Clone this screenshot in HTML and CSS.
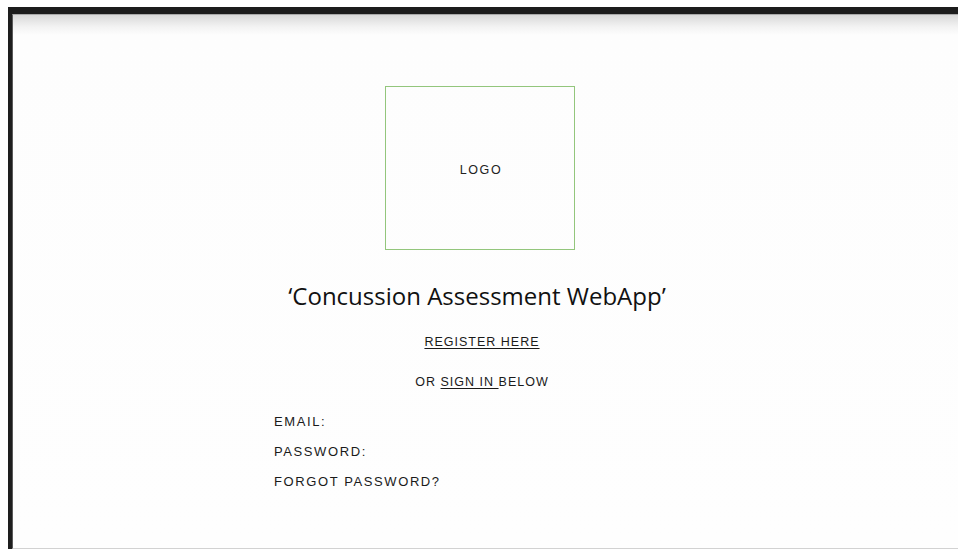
FILE: index.html
```html
<!DOCTYPE html>
<html lang="en">
<head>
<meta charset="utf-8">
<title>Concussion Assessment WebApp</title>
<link rel="stylesheet" href="styles.css">
</head>
<body>
<div class="frame">
  <main class="page">
    <section class="intro">
      <div class="logo-box"><span class="logo-text">LOGO</span></div>
      <h1 class="app-title">‘Concussion Assessment WebApp’</h1>
      <p class="register"><a href="#" class="link">REGISTER HERE</a></p>
      <p class="signin">OR <a href="#" class="link">SIGN IN </a>BELOW</p>
    </section>
    <section class="login">
      <p class="field">EMAIL:</p>
      <p class="field">PASSWORD:</p>
      <p class="field">FORGOT PASSWORD?</p>
    </section>
  </main>
</div>
</body>
</html>
```
FILE: styles.css
```css
html, body {
  margin: 0;
  padding: 0;
  height: 100%;
  background: #ffffff;
  overflow: hidden;
}

.frame {
  box-sizing: border-box;
  height: calc(100% - 7px);
  margin: 7px 0 0 8px;
  border-top: 7px solid #1c1c1c;
  border-left: 4px solid #1e1e1e;
  display: flex;
}

.page {
  flex: 1;
  box-sizing: border-box;
  border-top: 1px solid #a9a9a9;
  border-left: 1px solid #5a5a5a;
  border-bottom: 1px solid #d2d2d2;
  background: linear-gradient(to bottom, #d9d9d9 0, #f3f3f3 12px, #fdfdfd 20px, #fefefe 100%);
  font-family: "Liberation Sans", Arial, sans-serif;
  color: #1a1a1a;
  display: flex;
  flex-direction: column;
}

.intro {
  display: flex;
  flex-direction: column;
  align-items: center;
  padding: 71px 11px 0 0;
}

.logo-box {
  box-sizing: border-box;
  width: 190px;
  height: 164px;
  border: 1px solid #93c67c;
  display: flex;
  align-items: center;
  justify-content: center;
  padding-top: 3px;
}

.logo-text {
  font-size: 12.5px;
  letter-spacing: 1.6px;
  color: #222;
  margin-left: 2px;
}

.app-title {
  margin: 30px 0 0 -6px;
  font-family: "Open Sans", "Noto Sans", sans-serif;
  font-weight: 400;
  font-size: 24px;
  line-height: 32px;
  color: #111;
  letter-spacing: 0;
}

.register,
.signin {
  margin: 0;
  font-size: 12.5px;
  line-height: 16px;
  letter-spacing: 1px;
  color: #1a1a1a;
}

.register {
  margin-top: 22px;
  margin-left: 4px;
}

.signin {
  margin-top: 24px;
  margin-left: 4px;
}

.link {
  color: inherit;
  text-decoration: underline;
  text-underline-offset: 2px;
}

.login {
  display: flex;
  flex-direction: column;
  gap: 14px;
  padding: 24px 0 0 261px;
}

.field {
  margin: 0;
  font-size: 13px;
  line-height: 16px;
  letter-spacing: 1.6px;
  color: #1a1a1a;
}
```
